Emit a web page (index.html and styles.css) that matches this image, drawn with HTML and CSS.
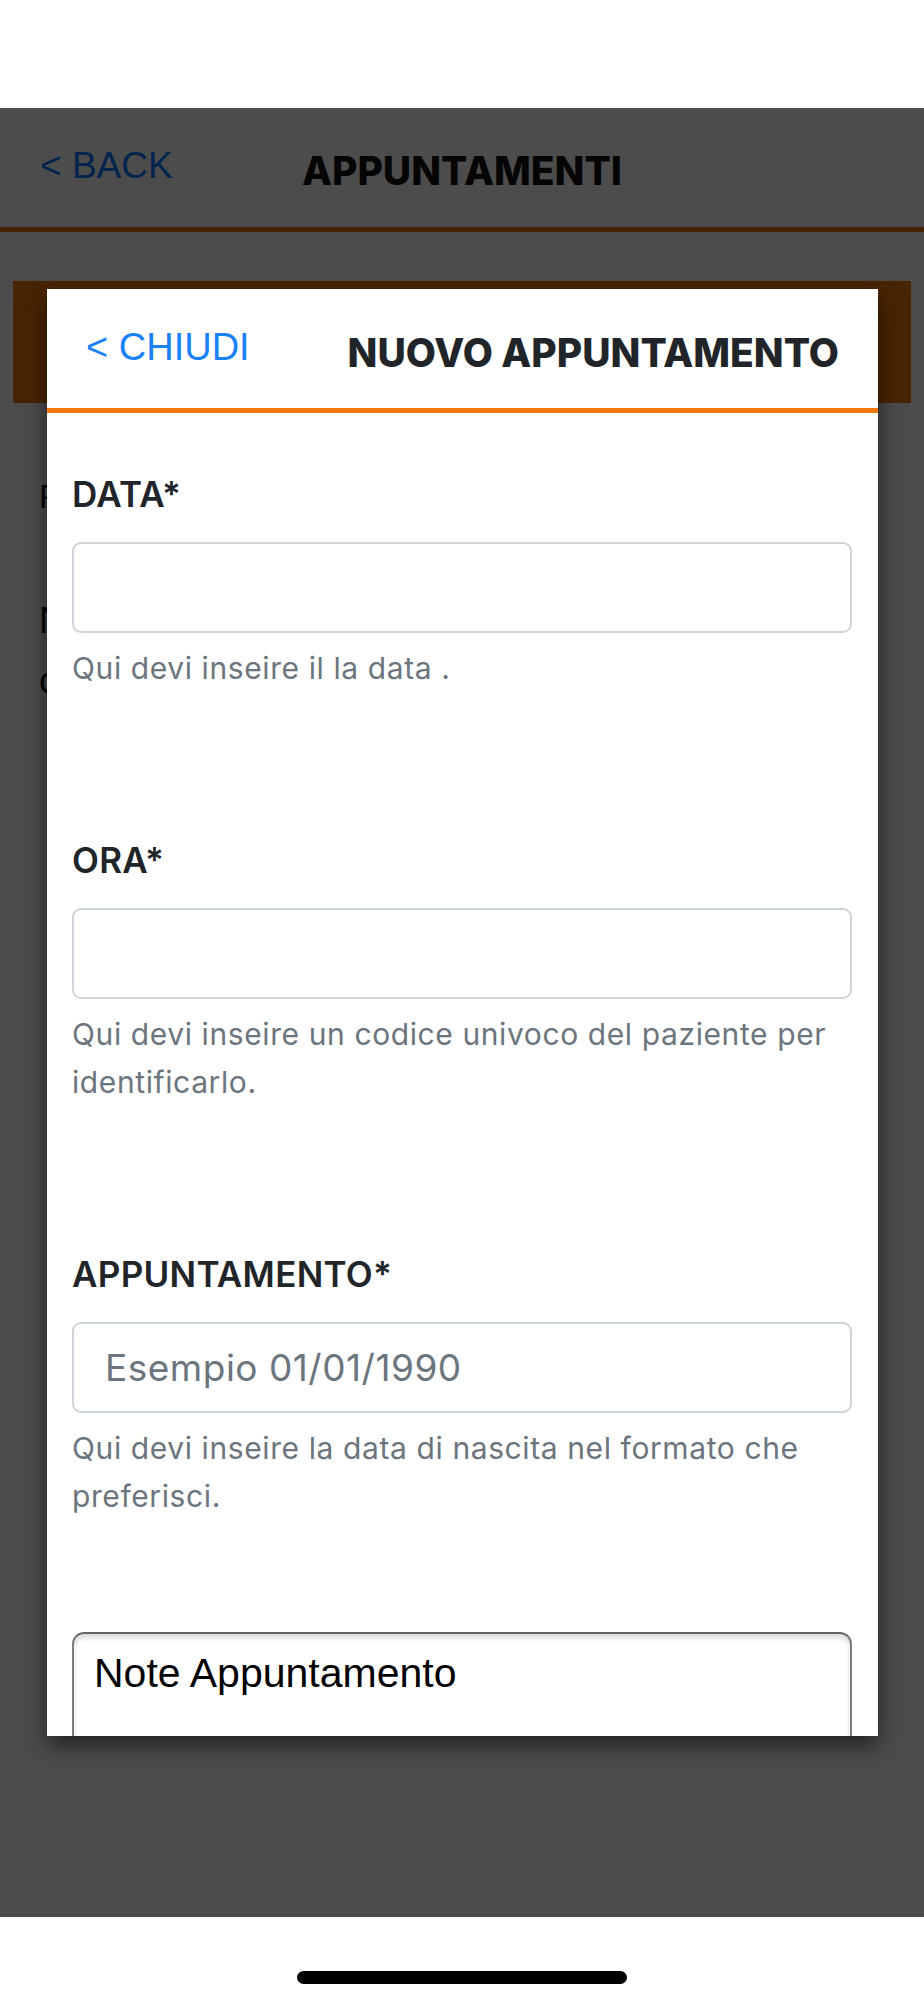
FILE: index.html
```html
<!DOCTYPE html>
<html lang="it">
<head>
<meta charset="utf-8">
<title>Nuovo appuntamento</title>
<link rel="stylesheet" href="styles.css">
</head>
<body>
<div class="status"></div>
<div class="app">
  <div class="page">
    <div class="topbar">
      <a class="back">&lt; BACK</a>
      <div class="topbar-title">APPUNTAMENTI</div>
    </div>
    <div class="orange-bar"></div>
    <div class="page-text">
      <p class="pline">Pazienti</p>
      <p class="pline para">Nessun appuntamento<br>clicca sul pulsante</p>
    </div>
  </div>
  <div class="overlay"></div>
  <div class="modal">
    <div class="modal-head">
      <a class="close">&lt; CHIUDI</a>
      <div class="modal-title">NUOVO APPUNTAMENTO</div>
    </div>
    <div class="modal-body">
      <div class="group">
        <label class="label">DATA*</label>
        <input class="field" type="text">
        <div class="help">Qui devi inseire il la data .</div>
      </div>
      <div class="group">
        <label class="label">ORA*</label>
        <input class="field" type="text">
        <div class="help">Qui devi inseire un codice univoco del paziente per identificarlo.</div>
      </div>
      <div class="group">
        <label class="label">APPUNTAMENTO*</label>
        <input class="field" type="text" placeholder="Esempio 01/01/1990">
        <div class="help">Qui devi inseire la data di nascita nel formato che preferisci.</div>
      </div>
      <textarea class="notes">Note Appuntamento</textarea>
    </div>
  </div>
</div>
<div class="homebar"><div class="indicator"></div></div>
</body>
</html>
```
FILE: styles.css
```css
html, body {
  margin: 0;
  padding: 0;
  background: #ffffff;
}
body {
  width: 924px;
  height: 2000px;
  overflow: hidden;
  font-family: Inter, "Liberation Sans", sans-serif;
}
.status {
  height: 108px;
  background: #ffffff;
}
.app {
  position: relative;
  height: 1809px;
  overflow: hidden;
  background: #ffffff;
}
.page {
  height: 100%;
}
.topbar {
  border-bottom: 5px solid #f47b0a;
  display: flex;
  align-items: center;
  padding-left: 40px;
  box-sizing: border-box;
  height: 124px;
}
.back {
  font-family: "Liberation Sans", sans-serif;
  font-size: 37px;
  color: #007aff;
  margin-top: -4px;
  width: 262px;
}
.topbar-title {
  font-family: Inter, sans-serif;
  font-weight: 800;
  font-size: 39px;
  color: #111111;
  margin-top: 6px;
}
.orange-bar {
  margin: 49px 13px 0 13px;
  height: 122px;
  background: #f47b0a;
}
.page-text {
  padding: 66px 0 0 39px;
}
.pline {
  margin: 0 0 66px 0;
  font-family: "Liberation Sans", sans-serif;
  font-size: 33px;
  line-height: 56px;
  color: #111111;
}
.para {
  font-size: 37px;
  line-height: 60px;
}
.overlay {
  position: absolute;
  inset: 0;
  background: rgba(0, 0, 0, 0.7);
}
.modal {
  position: absolute;
  top: 181px;
  left: 47px;
  width: 831px;
  height: 1447px;
  background: #ffffff;
  overflow: hidden;
  box-shadow: 0 10px 22px rgba(0, 0, 0, 0.55);
}
.modal-head {
  height: 124px;
  border-bottom: 5px solid #f47b0a;
  box-sizing: border-box;
  display: flex;
  align-items: center;
  justify-content: space-between;
  padding: 0 39px 0 39px;
}
.close {
  font-family: "Liberation Sans", sans-serif;
  font-size: 38px;
  color: #1a82f7;
  margin-top: -2px;
}
.modal-title {
  font-family: Inter, sans-serif;
  font-weight: 800;
  font-size: 39px;
  color: #212529;
  margin-top: 7px;
}
.modal-body {
  padding: 56px 26px 0 25px;
  display: flex;
  flex-direction: column;
}
.group {
  display: flex;
  flex-direction: column;
  margin-bottom: 143px;
}
.group:last-of-type {
  margin-bottom: 112px;
}
.label {
  font-family: Inter, sans-serif;
  font-weight: 600;
  font-size: 35px;
  letter-spacing: 0.3px;
  line-height: 51px;
  color: #212529;
  margin-bottom: 22px;
}
.field {
  box-sizing: border-box;
  height: 91px;
  width: 100%;
  border: 2px solid #ced4da;
  border-radius: 9px;
  padding: 0 31px;
  font-family: Inter, sans-serif;
  font-size: 37px;
  letter-spacing: 0.5px;
  color: #495057;
  background: #ffffff;
  outline: none;
}
.field::placeholder {
  color: #6c757d;
}
.help {
  margin-top: 11px;
  font-family: Inter, sans-serif;
  font-size: 30px;
  letter-spacing: 0.6px;
  line-height: 48px;
  color: #6c757d;
}
.notes {
  box-sizing: border-box;
  width: 100%;
  height: 200px;
  border: 2px solid #7d7d7d;
  border-top-color: #666666;
  border-radius: 12px;
  box-shadow: inset 0 4px 5px rgba(0, 0, 0, 0.14);
  padding: 15px 20px;
  font-family: "Liberation Sans", sans-serif;
  font-size: 41px;
  line-height: 48px;
  color: #000000;
  resize: none;
  outline: none;
  background: #ffffff;
}
.homebar {
  height: 83px;
  display: flex;
  justify-content: center;
  align-items: flex-start;
}
.indicator {
  margin-top: 54px;
  width: 330px;
  height: 13px;
  border-radius: 7px;
  background: #000000;
}
```
